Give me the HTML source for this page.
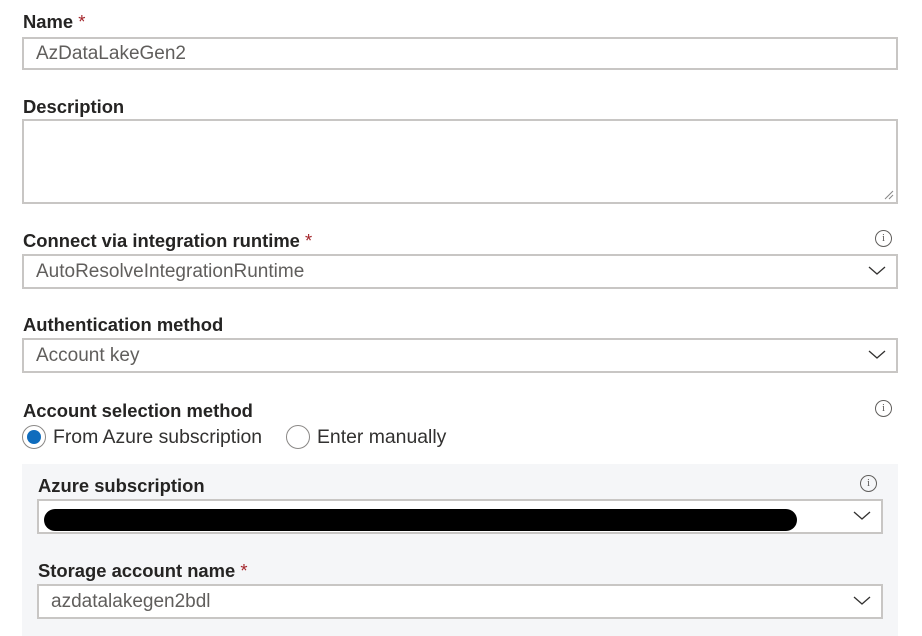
<!DOCTYPE html>
<html><head><style>
body{margin:0;width:922px;height:636px;background:#fff;font-family:"Liberation Sans",sans-serif;color:#323130;position:relative;overflow:hidden}
.a{position:absolute}
.lbl{font-size:18.4px;font-weight:600;color:#252423;line-height:20px}
.req{color:#a4262c;font-weight:400}
.in{box-sizing:border-box;border:2px solid #c8c6c4;background:#fff;font-size:19px;color:#605e5c;padding-left:12px;line-height:30px}
.chev{position:absolute;right:10px;top:8px}
.info{position:absolute;width:15px;height:15px;border:1px solid #605e5c;border-radius:50%;font-size:11px;text-align:center;line-height:15px;color:#605e5c;font-family:"Liberation Serif",serif}
</style></head><body>
<div class="a lbl" style="left:23px;top:12px">Name <span class="req">*</span></div>
<div class="a in" style="left:22px;top:37px;width:876px;height:33px">AzDataLakeGen2</div>
<div class="a lbl" style="left:23px;top:97px">Description</div>
<div class="a in" style="left:22px;top:119px;width:876px;height:85px">
<svg style="position:absolute;right:2px;bottom:2px" width="10" height="10"><path d="M9 1L1 9M9 5L5 9" stroke="#888" stroke-width="1"/></svg></div>
<div class="a lbl" style="left:23px;top:231px">Connect via integration runtime <span class="req">*</span></div>
<div class="info" style="left:875px;top:230px">i</div>
<div class="a in" style="left:22px;top:254px;width:876px;height:35px;line-height:32px">AutoResolveIntegrationRuntime<svg class="chev" width="18" height="12"><path d="M1 3L9 10L17 3" fill="none" stroke="#323130" stroke-width="1.3"/></svg></div>
<div class="a lbl" style="left:23px;top:315px">Authentication method</div>
<div class="a in" style="left:22px;top:338px;width:876px;height:35px;line-height:32px">Account key<svg class="chev" width="18" height="12"><path d="M1 3L9 10L17 3" fill="none" stroke="#323130" stroke-width="1.3"/></svg></div>
<div class="a lbl" style="left:23px;top:401px">Account selection method</div>
<div class="info" style="left:875px;top:400px">i</div>
<div class="a" style="left:22px;top:425px;width:24px;height:24px;box-sizing:border-box;border:1px solid #8a8886;border-radius:50%"><div style="position:absolute;left:4px;top:4px;width:14px;height:14px;border-radius:50%;background:#0f6cbd"></div></div>
<div class="a" style="left:53px;top:426px;font-size:19.4px;color:#323130">From Azure subscription</div>
<div class="a" style="left:286px;top:425px;width:24px;height:24px;box-sizing:border-box;border:1px solid #8a8886;border-radius:50%"></div>
<div class="a" style="left:317px;top:426px;font-size:19.4px;color:#323130">Enter manually</div>
<div class="a" style="left:22px;top:464px;width:876px;height:172px;background:#f5f6f8"></div>
<div class="a lbl" style="left:38px;top:476px">Azure subscription</div>
<div class="info" style="left:860px;top:475px">i</div>
<div class="a in" style="left:37px;top:499px;width:846px;height:35px"><div style="position:absolute;left:5px;top:8px;width:753px;height:22px;background:#000;border-radius:11px"></div><svg class="chev" width="18" height="12"><path d="M1 3L9 10L17 3" fill="none" stroke="#323130" stroke-width="1.3"/></svg></div>
<div class="a lbl" style="left:38px;top:561px">Storage account name <span class="req">*</span></div>
<div class="a in" style="left:37px;top:584px;width:846px;height:35px;line-height:32px">azdatalakegen2bdl<svg class="chev" width="18" height="12"><path d="M1 3L9 10L17 3" fill="none" stroke="#323130" stroke-width="1.3"/></svg></div>
</body></html>
